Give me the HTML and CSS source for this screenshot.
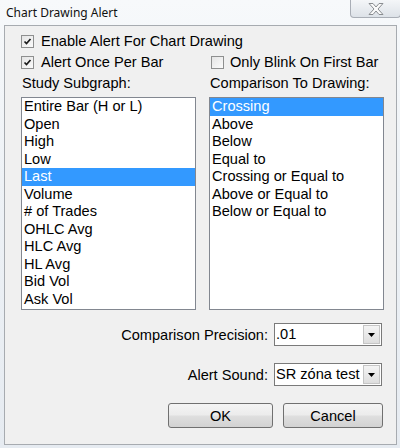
FILE: index.html
```html
<!DOCTYPE html>
<html>
<head>
<meta charset="utf-8">
<title>Chart Drawing Alert</title>
<link rel="stylesheet" href="styles.css">
</head>
<body>
<div class="window">
  <div class="titlebar">
    <span class="title">Chart Drawing Alert</span>
    <div class="close">
      <svg width="18" height="14" viewBox="0 0 18 14"><path d="M2 1.5 H6 L9 5 L12 1.5 H16 L11 7 L16 12.5 H12 L9 9 L6 12.5 H2 L7 7 Z" fill="#fafafa" stroke="#8a8d91" stroke-width="1" stroke-linejoin="round"/></svg>
    </div>
  </div>
  <div class="panel">
    <div class="grid">
      <label class="check wide"><span class="box"><svg width="11" height="11" viewBox="0 0 11 11"><path d="M2.5 5.5 L4.5 7.5 L8.5 3" fill="none" stroke="#1a1a1a" stroke-width="1.7"/></svg></span>Enable Alert For Chart Drawing</label>
      <label class="check"><span class="box"><svg width="11" height="11" viewBox="0 0 11 11"><path d="M2.5 5.5 L4.5 7.5 L8.5 3" fill="none" stroke="#1a1a1a" stroke-width="1.7"/></svg></span>Alert Once Per Bar</label>
      <label class="check col2"><span class="box"></span>Only Blink On First Bar</label>
      <div class="caption">Study Subgraph:</div>
      <div class="caption">Comparison To Drawing:</div>
      <ul class="list">
        <li>Entire Bar (H or L)</li>
        <li>Open</li>
        <li>High</li>
        <li>Low</li>
        <li class="sel">Last</li>
        <li>Volume</li>
        <li># of Trades</li>
        <li>OHLC Avg</li>
        <li>HLC Avg</li>
        <li>HL Avg</li>
        <li>Bid Vol</li>
        <li>Ask Vol</li>
      </ul>
      <ul class="list">
        <li class="sel">Crossing</li>
        <li>Above</li>
        <li>Below</li>
        <li>Equal to</li>
        <li>Crossing or Equal to</li>
        <li>Above or Equal to</li>
        <li>Below or Equal to</li>
      </ul>
    </div>
    <div class="form-row first">
      <span class="flabel">Comparison Precision:</span>
      <div class="combo"><span class="ctext">.01</span><span class="arrow"><svg width="7" height="4" viewBox="0 0 7 4"><path d="M0 0 H7 L3.5 4 Z" fill="#000"/></svg></span></div>
    </div>
    <div class="form-row">
      <span class="flabel">Alert Sound:</span>
      <div class="combo"><span class="ctext">SR zóna test</span><span class="arrow"><svg width="7" height="4" viewBox="0 0 7 4"><path d="M0 0 H7 L3.5 4 Z" fill="#000"/></svg></span></div>
    </div>
    <div class="buttons">
      <button class="btn ok">OK</button>
      <button class="btn cancel">Cancel</button>
    </div>
  </div>
</div>
</body>
</html>
```
FILE: styles.css
```css
* { box-sizing: border-box; }
html, body { margin: 0; padding: 0; }
body {
  width: 400px;
  height: 448px;
  overflow: hidden;
  font-family: "Liberation Sans", Arial, sans-serif;
  font-size: 14.6px;
  color: #000;
  background: #eef2f6;
}
.window {
  height: 448px;
  display: flex;
  flex-direction: column;
  padding: 0 3px 3px 4px;
  background: linear-gradient(to bottom, #f7f9fb 0%, #eef2f6 40%, #e6ebf1 100%);
}
.titlebar {
  height: 25px;
  display: flex;
  justify-content: space-between;
  align-items: flex-start;
}
.title {
  font-family: "Noto Sans", "Open Sans", sans-serif;
  font-size: 12px;
  line-height: 16px;
  margin: 5px 0 0 2px;
  color: #111;
}
.close {
  width: 51px;
  height: 18px;
  margin-right: -4px;
  border: 1px solid #a9aeb6;
  border-top: none;
  border-radius: 0 0 4px 4px;
  background: linear-gradient(to bottom, #f4f6f8, #dde2e8);
  display: flex;
  align-items: center;
  justify-content: center;
}
.panel {
  flex: 1;
  background: #f0f0f0;
  border: 1px solid #a7abb0;
  padding: 5px 12px 0 16px;
  display: flex;
  flex-direction: column;
}
.grid {
  display: grid;
  grid-template-columns: 175px 175px;
  grid-template-rows: 21px 21px 21px auto;
  column-gap: 13px;
}
.check {
  display: flex;
  align-items: center;
  gap: 7px;
  line-height: 21px;
  white-space: nowrap;
}
.wide { grid-column: 1 / span 2; }
.col2 { padding-left: 2px; gap: 6px; }
.box {
  width: 13px;
  height: 13px;
  border: 1px solid #8e8f8f;
  background: linear-gradient(135deg, #e4e4e4, #fbfbfb);
  display: flex;
  align-items: center;
  justify-content: center;
  flex: none;
}
.caption {
  line-height: 21px;
  padding-left: 1px;
  white-space: nowrap;
}
.list {
  list-style: none;
  margin: 3px 0 0 0;
  padding: 0;
  height: 213px;
  border: 1px solid #828790;
  background: #fff;
  overflow: hidden;
}
.list li {
  line-height: 17.5px;
  height: 17.5px;
  padding-left: 2px;
  white-space: nowrap;
}
.list li.sel {
  background: #3399ff;
  color: #fff;
}
.form-row {
  display: flex;
  justify-content: flex-end;
  align-items: center;
  gap: 6px;
  padding-right: 2px;
  margin-top: 17px;
}
.form-row.first { margin-top: 13px; }
.flabel { white-space: nowrap; }
.combo {
  width: 108px;
  height: 23px;
  border: 1px solid #7a7a7a;
  background: #fff;
  display: flex;
  align-items: stretch;
  overflow: hidden;
}
.ctext {
  flex: 1;
  padding-left: 1px;
  line-height: 21px;
  white-space: nowrap;
  overflow: hidden;
}
.arrow {
  width: 17px;
  flex: none;
  margin: 1px;
  border: 1px solid #c5c5c5;
  background: linear-gradient(to bottom, #f4f4f4, #dedede);
  display: flex;
  align-items: center;
  justify-content: center;
}
.buttons {
  display: flex;
  justify-content: flex-end;
  gap: 10px;
  padding-right: 1px;
  margin-top: 17px;
}
.btn {
  height: 25px;
  border: 1px solid #707070;
  border-radius: 3px;
  background: linear-gradient(to bottom, #f4f4f4 0%, #ececec 48%, #dfdfdf 52%, #d2d2d2 100%);
  font-family: "Liberation Sans", Arial, sans-serif;
  font-size: 14.6px;
  color: #000;
  padding: 0;
}
.ok { width: 105px; }
.cancel { width: 100px; }
```
